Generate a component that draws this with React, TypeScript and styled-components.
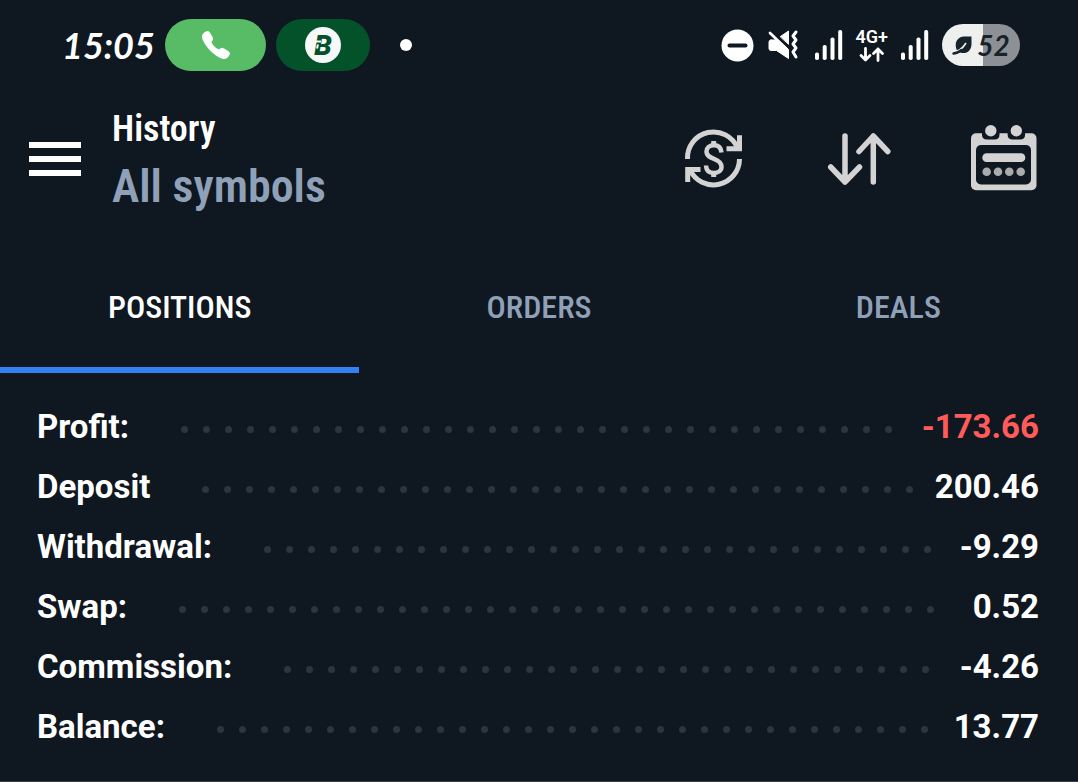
import React, { useState } from "react";
import styled, { createGlobalStyle } from "styled-components";
import { IoCall } from "react-icons/io5";

const color = {
  bg: "#0f1720",
  text: "#ffffff",
  muted: "#8fa1b8",
  icon: "#d3d3d3",
  accent: "#3381f7",
  loss: "#ff5b5b",
  dot: "#2b3541",
};

const condensed = `"Roboto Condensed", "Liberation Sans Narrow", Roboto, sans-serif`;

const GlobalStyle = createGlobalStyle`
  *, *::before, *::after { box-sizing: border-box; }
  body {
    margin: 0;
    background: ${color.bg};
    color: ${color.text};
    font-family: Roboto, "Liberation Sans", sans-serif;
  }
`;

const Screen = styled.div`
  display: flex;
  flex-direction: column;
`;

/* Status bar */

const StatusBar = styled.div`
  display: flex;
  align-items: center;
  justify-content: space-between;
  height: 90px;
  padding: 0 58px 0 62px;
`;

const StatusGroup = styled.div<{ $gap: number }>`
  display: flex;
  align-items: center;
  gap: ${(p) => p.$gap}px;
`;

const Clock = styled.time`
  width: 93px;
  font: italic 700 36px/52px Lato, "Liberation Sans", sans-serif;
`;

const Pill = styled.span<{ $bg: string; $width: number }>`
  display: flex;
  align-items: center;
  justify-content: center;
  width: ${(p) => p.$width}px;
  height: 52px;
  border-radius: 26px;
  background: ${(p) => p.$bg};
`;

const Notification = styled.span`
  width: 12px;
  height: 12px;
  margin-left: 20px;
  border-radius: 50%;
  background: ${color.text};
`;

const Network = styled.div`
  display: flex;
  flex-direction: column;
  align-items: center;
  gap: 1px;
  font-size: 18px;
  font-weight: 600;
  line-height: 18px;
`;

const Battery = styled.div`
  display: flex;
  align-items: center;
  justify-content: center;
  gap: 4px;
  width: 78px;
  height: 42px;
  border-radius: 21px;
  background: linear-gradient(90deg, #eef0f0 52%, #8d9196 52%);
  color: #18222b;
  font: italic 700 28px/42px Lato, "Liberation Sans", sans-serif;
`;

/* Header */

const Header = styled.header`
  display: flex;
  align-items: center;
  height: 136px;
  margin-bottom: 20px;
  padding: 0 41px 0 29px;
`;

const IconButton = styled.button`
  display: flex;
  padding: 0;
  border: 0;
  background: none;
  color: ${color.icon};
  cursor: pointer;
`;

const Titles = styled.div`
  flex: 1;
  margin: 6px 0 0 31px;
  font-family: ${condensed};
  font-weight: 600;
`;

const Title = styled.h1`
  margin: 0;
  font-size: 36px;
  font-weight: inherit;
  line-height: 50px;
`;

const Subtitle = styled.p`
  margin: 0;
  color: ${color.muted};
  font-size: 46px;
  line-height: 64px;
`;

const Actions = styled.div`
  display: flex;
  gap: 79px;
`;

/* Tabs */

const Tabs = styled.div`
  display: grid;
  grid-template-columns: repeat(3, 1fr);
`;

const Tab = styled.button<{ $active: boolean }>`
  height: 127px;
  padding: 0;
  border: 0;
  border-bottom: 6px solid ${(p) => (p.$active ? color.accent : "transparent")};
  background: none;
  color: ${(p) => (p.$active ? color.text : color.muted)};
  font-family: ${condensed};
  font-size: 32px;
  font-weight: 500;
  cursor: pointer;
`;

/* Summary */

const Summary = styled.dl`
  margin: 0;
  padding: 23px 39px 25px 37px;
  border-bottom: 1px solid #36404b;
`;

const Row = styled.div`
  display: flex;
  align-items: center;
  height: 60px;
  font-size: 33px;
  font-weight: 700;
`;

const Label = styled.dt`
  margin-right: 52px;
`;

const Leader = styled.span`
  display: flex;
  flex: 1;
  flex-wrap: wrap;
  gap: 15px;
  height: 7px;
  margin-top: 6px;
  overflow: hidden;
`;

const Dot = styled.i`
  width: 7px;
  height: 7px;
  border-radius: 50%;
  background: ${color.dot};
`;

const Value = styled.dd<{ $negative?: boolean }>`
  margin: 0 0 0 18px;
  color: ${(p) => (p.$negative ? color.loss : color.text)};
`;

const BrandIcon = () => (
  <svg width="36" height="36" viewBox="0 0 36 36" aria-hidden="true">
    <circle cx="18" cy="18" r="18" fill="#f6f8fa" />
    <text x="18" y="28" textAnchor="middle" fill="#04522a" fontFamily="Roboto" fontSize="28" fontWeight="900" fontStyle="italic">
      B
    </text>
    <path d="M9 14.500h7M13 17.500l-1 4" fill="none" stroke="#f6f8fa" strokeWidth="2" />
  </svg>
);

const DoNotDisturbIcon = () => (
  <svg width="33" height="33" viewBox="0 0 33 33" aria-hidden="true">
    <circle cx="16.5" cy="16.5" r="16" fill="#fff" />
    <path d="M8.5 16.5h16" stroke={color.bg} strokeWidth="4" strokeLinecap="round" />
  </svg>
);

const MuteIcon = () => (
  <svg width="35" height="32" viewBox="0 0 35 32" aria-hidden="true">
    <g fill="#fff" stroke="#fff" strokeLinejoin="round" strokeLinecap="round">
      <path d="M13.500 7.500l8-5.500v13z" strokeWidth="1" />
      <path d="M3 4L21 21" fill="none" stroke={color.bg} strokeWidth="6" />
      <path d="M4 11h7L21.500 20.500v9L9.500 21.500H4q-2 0-2-2V13q0-2 2-2z" strokeWidth="1" />
      <path d="M3 4L20 20.500" fill="none" strokeWidth="2.800" />
      <path d="M29 3l-3 4 3 4-3 4 3 4-3 4 3 5" fill="none" strokeWidth="3" />
    </g>
  </svg>
);

const SignalIcon = () => (
  <svg width="28" height="30" viewBox="0 0 28 30" fill="#fff" aria-hidden="true">
    <rect x="0" y="22.500" width="4" height="7.500" rx="1.800" />
    <rect x="7.700" y="15" width="4" height="15" rx="1.800" />
    <rect x="15.500" y="7.500" width="4" height="22.500" rx="1.800" />
    <rect x="23.200" y="0" width="4" height="30" rx="1.800" />
  </svg>
);

const DataIcon = () => (
  <svg width="26" height="15" viewBox="0 0 26 15" fill="none" stroke="#fff" strokeWidth="2.800" strokeLinecap="round" strokeLinejoin="round" aria-hidden="true">
    <path d="M6.500 1.500v11.500M2 8.500l4.500 4.500L11 8.500M19 13.500V2M14.500 6.500L19 2l4.500 4.500" />
  </svg>
);

const LeafIcon = () => (
  <svg width="21" height="20" viewBox="0 0 21 20" aria-hidden="true">
    <path d="M4.500 14.500C2 7 6 1.500 12 1.500h7.500V9c0 6-4 9.500-9 9-2 0-4-1-6-3.500z" fill="#18222b" />
    <path d="M0 17.500C6 17 11 13 14 8" fill="none" stroke="#eef0f0" strokeWidth="1.600" />
    <path d="M1.500 18.500C4 18.500 7 17 9.500 15" fill="none" stroke="#18222b" strokeWidth="2.400" strokeLinecap="round" />
  </svg>
);

const MenuIcon = () => (
  <svg width="52" height="36" viewBox="0 0 52 36" fill="#fff" aria-hidden="true">
    <path d="M0 2h52v6H0zM0 16h52v6H0zM0 30h52v6H0z" />
  </svg>
);

const CurrencyIcon = () => (
  <svg width="66" height="66" viewBox="0 0 66 66" fill="none" stroke="currentColor" strokeWidth="5" aria-hidden="true">
    <path d="M6.500 34A26 26 0 0 1 56.500 23" />
    <path d="M58.500 10.300V23.800H45.500" />
    <path d="M58.500 34A26 26 0 0 1 9 45" />
    <path d="M6.700 57V44.500H19.500" />
    <path d="M32.700 16v5M32.700 47v5" />
    <path d="M40.500 27.500C40 22.500 37 20.300 33 20.300c-4.500 0-7.500 2.500-7.500 6.300 0 4.200 3.500 5.700 7.500 7.200 4.500 1.700 7.500 3.700 7.500 8 0 3.900-3.200 6.200-7.500 6.200-5 0-7.800-2.500-8-7.500" strokeWidth="4.500" />
  </svg>
);

const SortIcon = () => (
  <svg width="66" height="66" viewBox="0 0 66 66" fill="none" stroke="currentColor" strokeWidth="5.500" strokeLinecap="round" strokeLinejoin="round" aria-hidden="true">
    <path d="M19 11v46M4.700 42L19 57l14.500-15" />
    <path d="M47.300 57V11M33 26.500L47.300 11l14.500 15.500" />
  </svg>
);

const CalendarIcon = () => (
  <svg width="66" height="66" viewBox="0 0 66 66" fill="currentColor" aria-hidden="true">
    <rect x="0" y="8.300" width="65.500" height="57" rx="5" />
    <rect x="5" y="20" width="55" height="39.500" rx="5" fill={color.bg} />
    <path d="M11 5h17.500v4.500q0 5-5 5h-7.500q-5 0-5-5zM36.600 5h17.500v4.500q0 5-5 5h-7.500q-5 0-5-5z" fill={color.bg} />
    <circle cx="19.800" cy="5.800" r="5.700" />
    <circle cx="45.300" cy="5.800" r="5.700" />
    <rect x="11.300" y="28.300" width="43" height="8.700" rx="4.300" />
    <g fill="#a9abad">
      <circle cx="15.700" cy="46.700" r="4.300" />
      <circle cx="27" cy="46.700" r="4.300" />
      <circle cx="38.300" cy="46.700" r="4.300" />
      <circle cx="49.700" cy="46.700" r="4.300" />
    </g>
  </svg>
);

const tabs = ["POSITIONS", "ORDERS", "DEALS"];

const rows = [
  { label: "Profit:", value: "-173.66", negative: true },
  { label: "Deposit", value: "200.46" },
  { label: "Withdrawal:", value: "-9.29" },
  { label: "Swap:", value: "0.52" },
  { label: "Commission:", value: "-4.26" },
  { label: "Balance:", value: "13.77" },
];

const dots = Array.from({ length: 80 }, (_, i) => i);

export default function App() {
  const [active, setActive] = useState(0);

  return (
    <Screen>
      <GlobalStyle />
      <StatusBar>
        <StatusGroup $gap={10}>
          <Clock>15:05</Clock>
          <Pill $bg="#57bc65" $width={101}>
            <IoCall size={32} />
          </Pill>
          <Pill $bg="#04522a" $width={94}>
            <BrandIcon />
          </Pill>
          <Notification />
        </StatusGroup>
        <StatusGroup $gap={13}>
          <DoNotDisturbIcon />
          <MuteIcon />
          <SignalIcon />
          <Network>
            4G+
            <DataIcon />
          </Network>
          <SignalIcon />
          <Battery>
            <LeafIcon />
            52
          </Battery>
        </StatusGroup>
      </StatusBar>

      <Header>
        <IconButton aria-label="Menu">
          <MenuIcon />
        </IconButton>
        <Titles>
          <Title>History</Title>
          <Subtitle>All symbols</Subtitle>
        </Titles>
        <Actions>
          <IconButton aria-label="Symbols">
            <CurrencyIcon />
          </IconButton>
          <IconButton aria-label="Sort">
            <SortIcon />
          </IconButton>
          <IconButton aria-label="Period">
            <CalendarIcon />
          </IconButton>
        </Actions>
      </Header>

      <Tabs role="tablist">
        {tabs.map((name, i) => (
          <Tab key={name} role="tab" aria-selected={i === active} $active={i === active} onClick={() => setActive(i)}>
            {name}
          </Tab>
        ))}
      </Tabs>

      <Summary>
        {rows.map((row) => (
          <Row key={row.label}>
            <Label>{row.label}</Label>
            <Leader aria-hidden="true">
              {dots.map((d) => (
                <Dot key={d} />
              ))}
            </Leader>
            <Value $negative={row.negative}>{row.value}</Value>
          </Row>
        ))}
      </Summary>
    </Screen>
  );
}
